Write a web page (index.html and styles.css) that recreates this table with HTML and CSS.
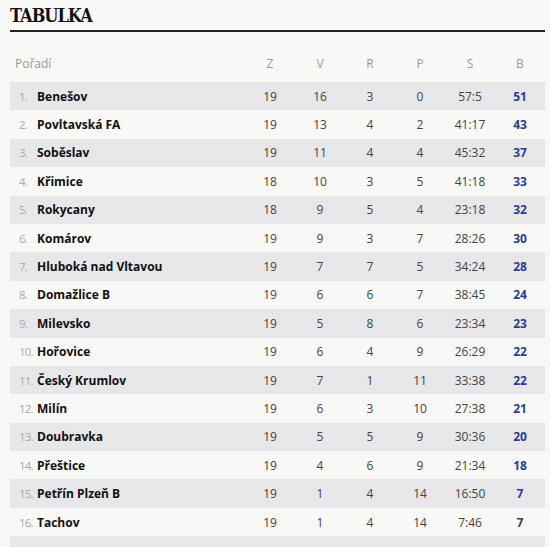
FILE: index.html
```html
<!DOCTYPE html>
<html lang="cs">
<head>
<meta charset="utf-8">
<link rel="stylesheet" href="styles.css">
</head>
<body>
<div class="wrap">
  <h2 class="title">TABULKA</h2>
  <table class="tab">
    <colgroup>
      <col class="c-rk"><col class="c-tm"><col class="c-st"><col class="c-st"><col class="c-st"><col class="c-st"><col class="c-st"><col class="c-st">
    </colgroup>
    <thead>
      <tr><th class="h-team" colspan="2">Pořadí</th><th>Z</th><th>V</th><th>R</th><th>P</th><th>S</th><th>B</th></tr>
    </thead>
    <tbody>
      <tr><td class="rk">1.</td><td class="tm">Benešov</td><td>19</td><td>16</td><td>3</td><td>0</td><td>57:5</td><td class="pts">51</td></tr>
      <tr><td class="rk">2.</td><td class="tm">Povltavská FA</td><td>19</td><td>13</td><td>4</td><td>2</td><td>41:17</td><td class="pts">43</td></tr>
      <tr><td class="rk">3.</td><td class="tm">Soběslav</td><td>19</td><td>11</td><td>4</td><td>4</td><td>45:32</td><td class="pts">37</td></tr>
      <tr><td class="rk">4.</td><td class="tm">Křimice</td><td>18</td><td>10</td><td>3</td><td>5</td><td>41:18</td><td class="pts">33</td></tr>
      <tr><td class="rk">5.</td><td class="tm">Rokycany</td><td>18</td><td>9</td><td>5</td><td>4</td><td>23:18</td><td class="pts">32</td></tr>
      <tr><td class="rk">6.</td><td class="tm">Komárov</td><td>19</td><td>9</td><td>3</td><td>7</td><td>28:26</td><td class="pts">30</td></tr>
      <tr><td class="rk">7.</td><td class="tm">Hluboká nad Vltavou</td><td>19</td><td>7</td><td>7</td><td>5</td><td>34:24</td><td class="pts">28</td></tr>
      <tr><td class="rk">8.</td><td class="tm">Domažlice B</td><td>19</td><td>6</td><td>6</td><td>7</td><td>38:45</td><td class="pts">24</td></tr>
      <tr><td class="rk">9.</td><td class="tm">Milevsko</td><td>19</td><td>5</td><td>8</td><td>6</td><td>23:34</td><td class="pts">23</td></tr>
      <tr><td class="rk">10.</td><td class="tm">Hořovice</td><td>19</td><td>6</td><td>4</td><td>9</td><td>26:29</td><td class="pts">22</td></tr>
      <tr><td class="rk">11.</td><td class="tm">Český Krumlov</td><td>19</td><td>7</td><td>1</td><td>11</td><td>33:38</td><td class="pts">22</td></tr>
      <tr><td class="rk">12.</td><td class="tm">Milín</td><td>19</td><td>6</td><td>3</td><td>10</td><td>27:38</td><td class="pts">21</td></tr>
      <tr><td class="rk">13.</td><td class="tm">Doubravka</td><td>19</td><td>5</td><td>5</td><td>9</td><td>30:36</td><td class="pts">20</td></tr>
      <tr><td class="rk">14.</td><td class="tm">Přeštice</td><td>19</td><td>4</td><td>6</td><td>9</td><td>21:34</td><td class="pts">18</td></tr>
      <tr><td class="rk">15.</td><td class="tm">Petřín Plzeň B</td><td>19</td><td>1</td><td>4</td><td>14</td><td>16:50</td><td class="pts">7</td></tr>
      <tr><td class="rk">16.</td><td class="tm">Tachov</td><td>19</td><td>1</td><td>4</td><td>14</td><td>7:46</td><td class="pts">7</td></tr>
      <tr><td class="rk">&nbsp;</td><td class="tm"></td><td></td><td></td><td></td><td></td><td></td><td class="pts"></td></tr>
    </tbody>
  </table>
</div>
</body>
</html>
```

FILE: styles.css
```css
html, body {
  margin: 0;
  padding: 0;
  background: #f8f8f6;
}
.wrap {
  padding: 0 5px 0 10px;
  font-family: "Open Sans", "Noto Sans", sans-serif;
  color: #333;
}
.title {
  margin: 0;
  padding-top: 1px;
  font-family: "DejaVu Serif", serif;
  font-stretch: condensed;
  font-weight: bold;
  font-size: 18px;
  line-height: 29px;
  letter-spacing: -1px;
  color: #111;
  border-bottom: 2px solid #222;
}
.tab {
  width: 100%;
  margin-top: 12px;
  border-collapse: collapse;
  table-layout: fixed;
  font-size: 12px;
}
.c-rk { width: 27px; }
.c-st { width: 50px; }
.tab th {
  height: 38px;
  padding: 0;
  font-weight: normal;
  color: #9a9a9a;
  text-align: center;
}
.tab th.h-team {
  text-align: left;
  padding-left: 5px;
}
.tab td {
  height: 28.4px;
  padding: 0;
  text-align: center;
  color: #444;
  white-space: nowrap;
}
.tab tbody tr:nth-child(odd) td {
  background: #e7e7e9;
}
.tab td.rk {
  padding-left: 9px;
  text-align: left;
  color: #aaa;
  font-size: 11.5px;
  letter-spacing: -0.8px;
}
.tab td.tm {
  text-align: left;
  font-weight: bold;
  color: #111;
}
.tab td.pts {
  font-weight: bold;
  color: #2b3d8f;
}
```
